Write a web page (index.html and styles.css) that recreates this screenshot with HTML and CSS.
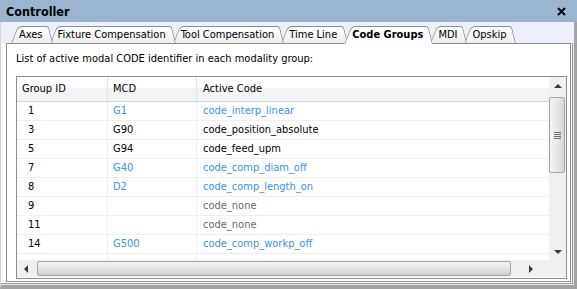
FILE: index.html
```html
<!DOCTYPE html>
<html>
<head>
<meta charset="utf-8">
<link rel="stylesheet" href="styles.css">
</head>
<body>
<div class="window">
  <div class="titlebar">
    <span class="title">Controller</span>
    <svg class="close" width="9" height="9" viewBox="0 0 9 9"><path d="M1 1 L8 8 M8 1 L1 8" stroke="#000" stroke-width="2" fill="none"/></svg>
  </div>
  <div class="frame">
    <div class="tabs">
      <div class="tab t1"><span>Axes</span></div>
      <div class="tab t2"><span>Fixture Compensation</span></div>
      <div class="tab t3"><span>Tool Compensation</span></div>
      <div class="tab t4"><span>Time Line</span></div>
      <div class="tab t5 active"><span>Code Groups</span></div>
      <div class="tab t6"><span>MDI</span></div>
      <div class="tab t7"><span>Opskip</span></div>
    </div>
    <div class="panel">
      <p class="caption">List of active modal CODE identifier in each modality group:</p>
      <div class="grid">
        <div class="table">
          <div class="row head">
            <div class="c c1">Group ID</div>
            <div class="c c2">MCD</div>
            <div class="c c3">Active Code</div>
          </div>
          <div class="row"><div class="c c1 num">1</div><div class="c c2 blue">G1</div><div class="c c3 blue">code_interp_linear</div></div>
          <div class="row"><div class="c c1 num">3</div><div class="c c2">G90</div><div class="c c3">code_position_absolute</div></div>
          <div class="row"><div class="c c1 num">5</div><div class="c c2">G94</div><div class="c c3">code_feed_upm</div></div>
          <div class="row"><div class="c c1 num">7</div><div class="c c2 blue">G40</div><div class="c c3 blue">code_comp_diam_off</div></div>
          <div class="row"><div class="c c1 num">8</div><div class="c c2 blue">D2</div><div class="c c3 blue">code_comp_length_on</div></div>
          <div class="row"><div class="c c1 num">9</div><div class="c c2"></div><div class="c c3 gray">code_none</div></div>
          <div class="row"><div class="c c1 num">11</div><div class="c c2"></div><div class="c c3 gray">code_none</div></div>
          <div class="row"><div class="c c1 num">14</div><div class="c c2 blue">G500</div><div class="c c3 blue">code_comp_workp_off</div></div>
          <div class="row"><div class="c c1"></div><div class="c c2"></div><div class="c c3"></div></div>
        </div>
        <div class="vscroll">
          <div class="arrow-box"><span class="tri up"></span></div>
          <div class="vtrack">
            <div class="vthumb"><span class="grip"></span></div>
          </div>
          <div class="arrow-box"><span class="tri down"></span></div>
        </div>
        <div class="hscroll">
          <div class="arrow-box h"><span class="tri left"></span></div>
          <div class="htrack">
            <div class="hthumb"></div>
          </div>
          <div class="arrow-box h"><span class="tri right"></span></div>
        </div>
        <div class="corner"></div>
      </div>
    </div>
  </div>
</div>
</body>
</html>
```
FILE: styles.css
```css
* { box-sizing: border-box; }
body {
  margin: 0;
  font-family: "DejaVu Sans Condensed", "Liberation Sans", sans-serif;
  font-size: 11px;
  color: #000;
}
.window {
  width: 577px;
  height: 289px;
  display: flex;
  flex-direction: column;
  background: #fff;
}
.titlebar {
  height: 22px;
  flex: none;
  background: #9bb5cf;
  display: flex;
  align-items: center;
  justify-content: space-between;
  padding: 0 11px 0 6px;
}
.title { font-weight: bold; font-size: 12.5px; }
.close { display: block; }
.frame {
  flex: 1;
  display: flex;
  flex-direction: column;
  border-left: 1px solid #d4d4d4;
  border-right: 3px solid #a3a3a3;
  border-bottom: 4px solid #a3a3a3;
  box-shadow: inset -1px -1px 0 #e8e8e8, inset -2px -2px 0 #9a9a9a;
  min-height: 0;
}
.tabs {
  height: 21px;
  flex: none;
  background: #edf0fa;
  display: flex;
  align-items: flex-end;
  padding-left: 10px;
  position: relative;
  z-index: 2;
  font-size: 11px;
}
.tab {
  position: relative;
  height: 17px;
  line-height: 17px;
  padding: 0 10px 0 8px;
  margin-left: -3px;
  white-space: nowrap;
}
.tab:first-child { margin-left: 0; }
.tab span { position: relative; z-index: 2; }
.tab::before, .tab::after {
  content: "";
  position: absolute;
  top: 0;
  bottom: 0;
  border-top: 1px solid #8e8e8e;
  background: linear-gradient(#ffffff, #eeeeee);
  transform-origin: bottom;
  z-index: 1;
}
.tab::before {
  left: 0;
  width: 60%;
  border-left: 1px solid #8e8e8e;
  border-top-left-radius: 5px;
  transform: skewX(-22deg);
}
.tab::after {
  right: 0;
  width: 60%;
  border-right: 1px solid #8e8e8e;
  border-top-right-radius: 3px;
  transform: skewX(14deg);
}
.t1 { z-index: 7; }
.t2 { z-index: 6; }
.t3 { z-index: 5; }
.t4 { z-index: 4; }
.t6 { z-index: 2; }
.t7 { z-index: 1; }
.tab.active {
  z-index: 9;
  font-weight: bold;
  height: 18px;
  margin-bottom: -1px;
  padding-bottom: 1px;
}
.tab.active::before, .tab.active::after { background: #fff; }
.panel {
  flex: 1;
  min-height: 0;
  margin: 0 3px 3px 5px;
  border: 1px solid #8e8e8e;
  background: #fff;
  padding: 7px 3px 2px 9px;
  display: flex;
  flex-direction: column;
  position: relative;
  z-index: 1;
}
.caption {
  margin: 0 0 10px 0;
  line-height: 15px;
  white-space: nowrap;
}
.grid {
  flex: 1;
  min-height: 0;
  border: 1px solid #8a8d92;
  display: grid;
  grid-template-columns: 1fr 17px;
  grid-template-rows: 1fr 17px;
  padding-bottom: 1px;
}
.table {
  overflow: hidden;
  min-width: 0;
  min-height: 0;
}
.row {
  display: grid;
  grid-template-columns: 91px 89px 1fr;
  height: 19px;
  border-bottom: 1px solid #efefef;
}
.row.head {
  height: 25px;
  border-bottom: 1px solid #d5d5d5;
  background: linear-gradient(#ffffff 0, #ffffff 45%, #f3f4f5 45%, #f3f4f5 100%);
}
.c {
  border-right: 1px solid #efefef;
  padding-left: 5px;
  line-height: 18px;
  white-space: nowrap;
  overflow: hidden;
}
.head .c { line-height: 24px; border-right-color: #e3e4e6; }
.c3 { padding-left: 6px; border-right: none; }
.num { padding-left: 11px; }
.blue { color: #3a91ea; }
.gray { color: #6a6a6a; }

.vscroll {
  grid-row: 1;
  grid-column: 2;
  background: #f0f0f0;
  display: flex;
  flex-direction: column;
}
.arrow-box {
  height: 17px;
  flex: none;
  display: flex;
  align-items: center;
  justify-content: center;
}
.arrow-box.h { width: 17px; height: 17px; }
.vtrack { flex: 1; padding: 3px 1px 0 0; }
.vthumb {
  height: 76px;
  border: 1px solid #a5a5a5;
  border-radius: 2px;
  background: linear-gradient(to right, #f4f4f4, #e8e8e8 50%, #d6d6d6);
  display: flex;
  align-items: center;
  justify-content: center;
}
.grip {
  width: 7px;
  height: 7px;
  background: repeating-linear-gradient(#6e6e6e 0 1px, transparent 1px 2px);
}
.hscroll {
  grid-row: 2;
  grid-column: 1;
  background: #f0f0f0;
  display: flex;
}
.htrack { flex: 1; padding: 1px 10px 0 3px; }
.hthumb {
  height: 15px;
  border: 1px solid #a5a5a5;
  border-radius: 2px;
  background: linear-gradient(#f3f3f3, #e4e4e4 50%, #cdcdcd);
}
.hscroll .arrow-box.h:last-child { width: 28px; justify-content: flex-start; padding-left: 8px; }
.corner { grid-row: 2; grid-column: 2; background: #f0f0f0; }
.tri { width: 0; height: 0; display: block; }
.tri.up { border-left: 4px solid transparent; border-right: 4px solid transparent; border-bottom: 4px solid #3a3a3a; }
.tri.down { border-left: 4px solid transparent; border-right: 4px solid transparent; border-top: 4px solid #3a3a3a; }
.tri.left { border-top: 4px solid transparent; border-bottom: 4px solid transparent; border-right: 4px solid #3a3a3a; }
.tri.right { border-top: 4px solid transparent; border-bottom: 4px solid transparent; border-left: 4px solid #3a3a3a; }
```
